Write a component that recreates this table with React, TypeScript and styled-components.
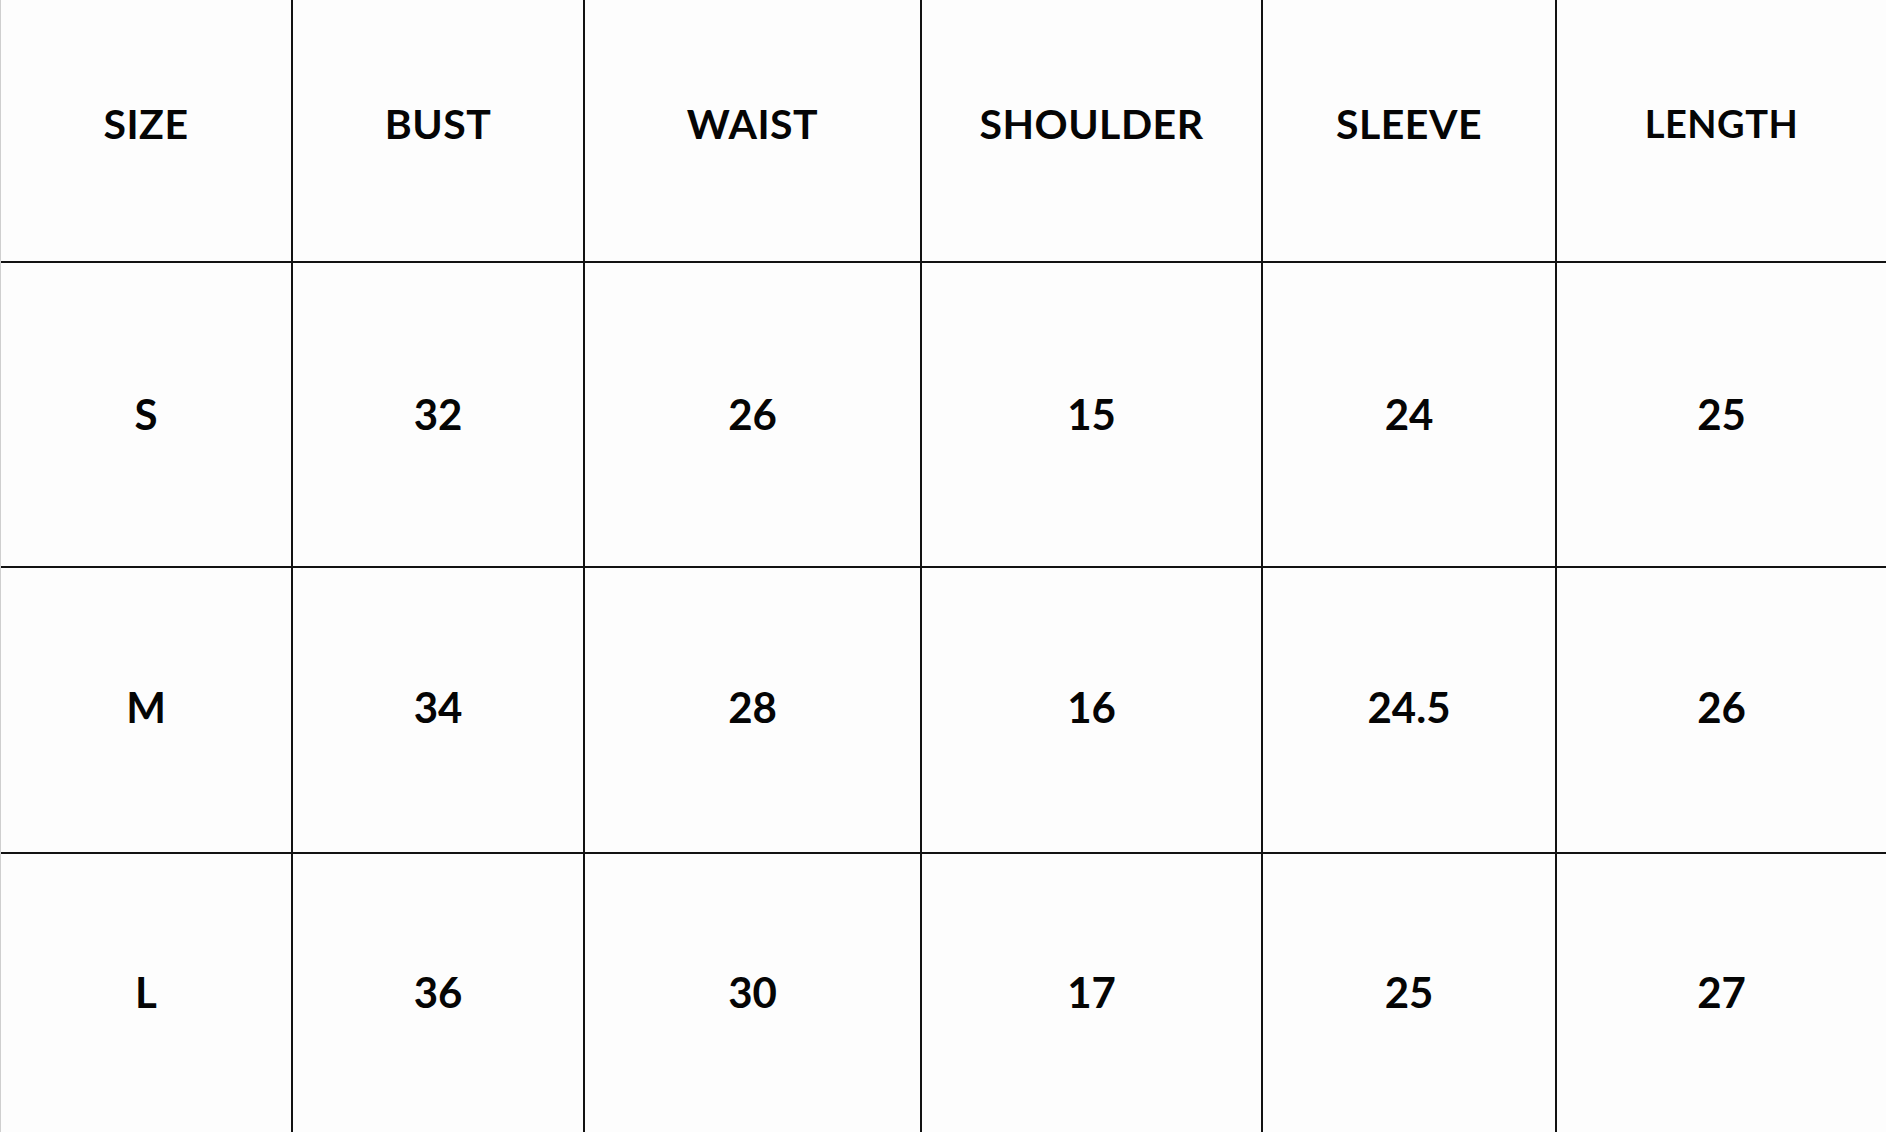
import React from "react";
import styled, { createGlobalStyle } from "styled-components";

const GlobalStyle = createGlobalStyle`
  html, body { margin: 0; padding: 0; background: #fdfdfd; }
  #root { height: 100vh; }
`;

const Table = styled.div`
  display: grid;
  grid-template-columns: 290px 290px 335px 339px 292px 1fr;
  grid-template-rows: 261px 303px 284px 1fr;
  gap: 2px;
  height: 100vh;
  width: 100%;
  box-sizing: border-box;
  background: #121212;
  border-left: 1px solid #cfcfcf;
  overflow: hidden;
  font-family: Lato, "Liberation Sans", sans-serif;
  color: #050505;
`;

const Cell = styled.div<{ $head?: boolean; $small?: boolean; $lift?: number }>`
  display: flex;
  align-items: center;
  justify-content: center;
  background: #fdfdfd;
  font-weight: 700;
  font-size: ${(p) => (p.$small ? "38px" : p.$head ? "41px" : "42px")};
  letter-spacing: ${(p) => (p.$head ? "0.5px" : "0")};
  padding-bottom: ${(p) => `${p.$lift ?? 2}px`};
  box-sizing: border-box;
`;

const headers = ["SIZE", "BUST", "WAIST", "SHOULDER", "SLEEVE", "LENGTH"];
const rows = [
  ["S", "32", "26", "15", "24", "25"],
  ["M", "34", "28", "16", "24.5", "26"],
  ["L", "36", "30", "17", "25", "27"],
];
const lifts = [2, 6, 2];

export default function App() {
  return (
    <>
      <GlobalStyle />
      <Table>
        {headers.map((h) => (
          <Cell key={h} $head $small={h === "LENGTH"} $lift={15}>
            {h}
          </Cell>
        ))}
        {rows.map((r, i) =>
          r.map((v, j) => (
            <Cell key={`${i}-${j}`} $lift={lifts[i]}>
              {v}
            </Cell>
          ))
        )}
      </Table>
    </>
  );
}
